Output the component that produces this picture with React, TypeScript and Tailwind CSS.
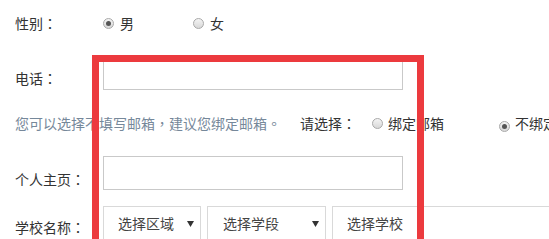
import React from "react";

const TC = { fontFamily: '"Noto Sans CJK TC", sans-serif' };

function P({ c }: { c: string }) {
  return <span style={TC}>{c}</span>;
}

function Radio({ checked }: { checked?: boolean }) {
  return (
    <span className="inline-flex w-[11px] h-[11px] rounded-full border border-[#a9a9a9] bg-[linear-gradient(#f4f4f4,#d8d8d8)] items-center justify-center shrink-0">
      {checked && <span className="w-[5px] h-[5px] rounded-full bg-[#555]" />}
    </span>
  );
}

function Arrow() {
  return (
    <svg width="7" height="6" viewBox="0 0 7 6" className="mt-[7px] shrink-0">
      <path d="M0 0 H7 L3.5 6 Z" fill="#333" />
    </svg>
  );
}

function Select({ w, label, arrow = true, pl = 14 }: { w: string; label: string; arrow?: boolean; pl?: number }) {
  return (
    <div className={`${w} h-[34px] border border-[#d9d9d9] flex items-start pt-[7px] shrink-0 ${pl === 15 ? "pl-[15px]" : "pl-[14px]"} pr-[6px]`}>
      <span className="flex-1 leading-[18px] text-[#444]">{label}</span>
      {arrow && <Arrow />}
    </div>
  );
}

export default function App() {
  return (
    <div
      className="relative w-[549px] h-[239px] overflow-hidden bg-white text-[14px] text-[#333]"
      style={{ fontFamily: '"Noto Sans CJK SC", "Noto Sans", sans-serif' }}
    >
      <div className="flex flex-col">
        {/* Row 1 */}
        <div className="flex pt-[14px] leading-[18px]">
          <div className="w-[103px] pl-[15px] shrink-0">性别<P c="：" /></div>
          <div className="flex items-center">
            <Radio checked />
            <span className="ml-[6px]">男</span>
            <span className="ml-[59px]"><Radio /></span>
            <span className="ml-[6px]">女</span>
          </div>
        </div>
        {/* Row 2 */}
        <div className="flex mt-[24px]">
          <div className="w-[103px] pl-[15px] pt-[13px] leading-[18px] shrink-0">电话<P c="：" /></div>
          <div className="w-[300px] h-[34px] border border-[#c9c9c9]" />
        </div>
        {/* Row 3 */}
        <div className="flex items-center mt-[24px] leading-[18px] whitespace-nowrap">
          <span className="pl-[15px] text-[#76889a]">您可以选择不填写邮箱<P c="，" />建议您绑定邮箱<P c="。" /></span>
          <span className="ml-[19px]">请选择<P c="：" /></span>
          <span className="ml-[16px]"><Radio /></span>
          <span className="ml-[5px]">绑定邮箱</span>
          <span className="ml-[55px]"><Radio checked /></span>
          <span className="ml-[5px]">不绑定邮箱</span>
        </div>
        {/* Row 4 */}
        <div className="flex mt-[24px]">
          <div className="w-[103px] pl-[15px] pt-[14px] leading-[18px] shrink-0">个人主页<P c="：" /></div>
          <div className="w-[300px] h-[34px] border border-[#c9c9c9]" />
        </div>
        {/* Row 5 */}
        <div className="flex mt-[16px]">
          <div className="w-[103px] pl-[15px] pt-[12px] leading-[18px] shrink-0">学校名称<P c="：" /></div>
          <div className="flex gap-[6px]">
            <Select w="w-[98px]" label="选择区域" />
            <Select w="w-[119px]" label="选择学段" pl={15} />
            <Select w="w-[240px]" label="选择学校" arrow={false} />
          </div>
        </div>
      </div>
      {/* red highlight box */}
      <div className="absolute left-[92px] top-[55px] w-[332px] h-[220px] border-[7px] border-[#ec3a3e]" />
    </div>
  );
}
